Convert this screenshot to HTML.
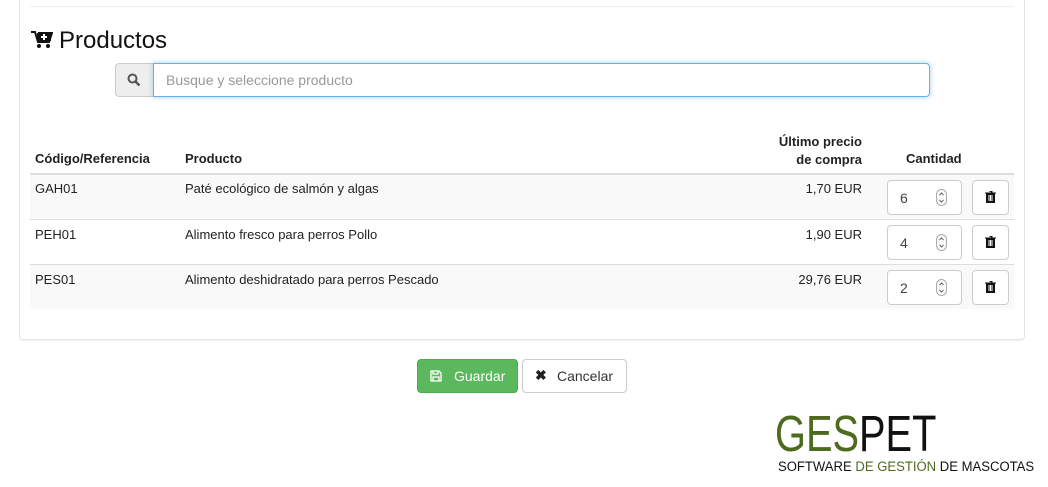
<!DOCTYPE html>
<html><head><meta charset="utf-8"><style>
*{margin:0;padding:0;box-sizing:border-box}
body{width:1048px;height:487px;background:#fff;font-family:"Liberation Sans",Arial,sans-serif;font-size:13px;color:#222;position:relative;overflow:hidden}
.a{position:absolute}
.panel{left:19px;top:-5px;width:1006px;height:345px;border:1px solid #e3e3e3;border-radius:4px;box-shadow:0 1px 1px rgba(0,0,0,.05)}
.row{left:30px;width:984px;height:45px;border-top:1px solid #ddd}
.g{background:#f9f9f9}
.num{width:75px;height:35px;border:1px solid #ccc;border-radius:4px;background:#fff;padding:9px 0 0 12px;font-size:14px;color:#444}
.spin{position:absolute;right:14px;top:8px}
.del{width:37px;height:35px;border:1px solid #ccc;border-radius:4px;background:#fff}
</style></head><body>
<div class="a panel"></div>
<div class="a" style="left:30px;top:6px;width:984px;border-top:1px solid #eee"></div>
<svg class="a" style="left:31px;top:31px" width="22" height="18" viewBox="0 0 22 18"><path d="M0 1h4l3 10h11l3-9H7" fill="none" stroke="#111" stroke-width="2"/><rect x="6" y="2" width="14" height="8" fill="#111"/><path d="M13 3v6M10 6h6" stroke="#fff" stroke-width="2"/><circle cx="8" cy="15" r="2" fill="#111"/><circle cx="17" cy="15" r="2" fill="#111"/></svg>
<div class="a" style="left:59px;top:27px;font-size:24px;color:#111">Productos</div>
<div class="a" style="left:115px;top:63px;width:39px;height:34px;background:#eee;border:1px solid #ccc;border-radius:4px 0 0 4px"></div>
<svg class="a" style="left:127px;top:73px" width="14" height="14" viewBox="0 0 14 14"><circle cx="5.5" cy="5.5" r="4" fill="none" stroke="#555" stroke-width="2"/><path d="M8.5 8.5l4 4" stroke="#555" stroke-width="2.4"/></svg>
<div class="a" style="left:153px;top:63px;width:777px;height:34px;border:1px solid #66afe9;border-radius:0 4px 4px 0;box-shadow:0 0 6px rgba(102,175,233,.6);padding:8px 12px;font-size:14px;color:#999">Busque y seleccione producto</div>
<div class="a" style="left:742px;top:133px;width:120px;text-align:right;font-weight:bold;line-height:18px;white-space:nowrap">Último precio<br>de compra</div>
<div class="a" style="left:35px;top:151px;font-weight:bold">Código/Referencia</div>
<div class="a" style="left:185px;top:151px;font-weight:bold">Producto</div>
<div class="a" style="left:906px;top:151px;font-weight:bold">Cantidad</div>
<div class="a row g" style="top:173px;border-top:2px solid #ddd"></div>
<div class="a row" style="top:219px"></div>
<div class="a row g" style="top:264px"></div>
<div class="a" style="left:35px;top:181px">GAH01</div><div class="a" style="left:185px;top:181px">Paté ecológico de salmón y algas</div><div class="a" style="left:742px;top:181px;width:120px;text-align:right">1,70 EUR</div>
<div class="a" style="left:35px;top:227px">PEH01</div><div class="a" style="left:185px;top:227px">Alimento fresco para perros Pollo</div><div class="a" style="left:742px;top:227px;width:120px;text-align:right">1,90 EUR</div>
<div class="a" style="left:35px;top:272px">PES01</div><div class="a" style="left:185px;top:272px">Alimento deshidratado para perros Pescado</div><div class="a" style="left:742px;top:272px;width:120px;text-align:right">29,76 EUR</div>
<div class="a num" style="left:887px;top:180px">6<svg class="spin" width="11" height="17" viewBox="0 0 11 17"><rect x=".5" y=".5" width="10" height="16" rx="5" fill="#fafafa" stroke="#aaa"/><path d="M3.5 6l2-2 2 2M3.5 11l2 2 2-2" fill="none" stroke="#666"/></svg></div>
<div class="a num" style="left:887px;top:225px">4<svg class="spin" width="11" height="17" viewBox="0 0 11 17"><rect x=".5" y=".5" width="10" height="16" rx="5" fill="#fafafa" stroke="#aaa"/><path d="M3.5 6l2-2 2 2M3.5 11l2 2 2-2" fill="none" stroke="#666"/></svg></div>
<div class="a num" style="left:887px;top:270px">2<svg class="spin" width="11" height="17" viewBox="0 0 11 17"><rect x=".5" y=".5" width="10" height="16" rx="5" fill="#fafafa" stroke="#aaa"/><path d="M3.5 6l2-2 2 2M3.5 11l2 2 2-2" fill="none" stroke="#666"/></svg></div>
<div class="a del" style="left:972px;top:180px"></div><div class="a del" style="left:972px;top:225px"></div><div class="a del" style="left:972px;top:270px"></div>
<svg class="a" style="left:985px;top:191px" width="11" height="12" viewBox="0 0 11 12"><path d="M0 2h11M4 0h3v2M1.5 3h8v9h-8z" fill="#111" stroke="#111"/><path d="M4 4v6M5.5 4v6M7 4v6" stroke="#fff"/></svg>
<svg class="a" style="left:985px;top:236px" width="11" height="12" viewBox="0 0 11 12"><path d="M0 2h11M4 0h3v2M1.5 3h8v9h-8z" fill="#111" stroke="#111"/><path d="M4 4v6M5.5 4v6M7 4v6" stroke="#fff"/></svg>
<svg class="a" style="left:985px;top:281px" width="11" height="12" viewBox="0 0 11 12"><path d="M0 2h11M4 0h3v2M1.5 3h8v9h-8z" fill="#111" stroke="#111"/><path d="M4 4v6M5.5 4v6M7 4v6" stroke="#fff"/></svg>
<div class="a" style="left:417px;top:359px;width:101px;height:34px;background:#5cb85c;border:1px solid #4cae4c;border-radius:4px;color:#fff;font-size:14px;padding:8px 0 0 36px">Guardar</div>
<svg class="a" style="left:430px;top:370px" width="12" height="12" viewBox="0 0 12 12"><path d="M1 1h8l2 2v8H1z M3 1v3h5V1 M3 11V7h6v4" fill="none" stroke="#fff" stroke-width="1.3"/></svg>
<div class="a" style="left:522px;top:359px;width:105px;height:34px;background:#fff;border:1px solid #ccc;border-radius:4px;font-size:14px;padding:8px 0 0 34px;color:#333">Cancelar</div>
<div class="a" style="left:535px;top:367px;font-size:14px;font-weight:bold;color:#222">✖</div>
<div class="a" style="left:775px;top:408px;font-size:51px;line-height:52px;font-family:'Liberation Sans',sans-serif;white-space:nowrap;transform:scaleX(.78);transform-origin:left;-webkit-text-stroke:0"><span style="color:#4e6a1e">GES</span><span style="color:#111">PET</span></div>
<div class="a" style="left:778px;top:459px;font-size:13.5px;font-family:'Liberation Sans',sans-serif;white-space:nowrap;transform:scaleX(.97);transform-origin:left"><span style="color:#111">SOFTWARE</span> <span style="color:#4e6a1e">DE GESTIÓN</span> <span style="color:#111">DE MASCOTAS</span></div>
</body></html>
